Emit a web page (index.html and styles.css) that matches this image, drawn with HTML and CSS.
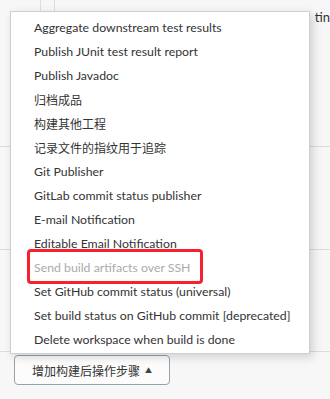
FILE: index.html
```html
<!DOCTYPE html>
<html lang="zh-CN">
<head>
    <meta charset="UTF-8">
    <meta name="viewport" content="width=device-width, initial-scale=1.0">
    <title>构建后操作</title>
    <link rel="stylesheet" href="styles.css">
</head>
<body>
    <div class="form">
        <div class="row row-first">
            <div class="cols">
                <span class="col"></span>
                <span class="col"></span>
            </div>
            <span class="peek">tin</span>
        </div>
        <div class="row row-mid"></div>
        <div class="row row-last"></div>

        <div class="actions">
            <button class="add-btn"><span class="zh">增加构建后操作步骤</span> <span class="caret">&#9650;</span></button>
        </div>
    </div>

    <ul class="menu">
        <li>Aggregate downstream test results</li>
        <li>Publish JUnit test result report</li>
        <li>Publish Javadoc</li>
        <li class="zh">归档成品</li>
        <li class="zh">构建其他工程</li>
        <li class="zh">记录文件的指纹用于追踪</li>
        <li>Git Publisher</li>
        <li>GitLab commit status publisher</li>
        <li>E-mail Notification</li>
        <li>Editable Email Notification</li>
        <li class="disabled">Send build artifacts over SSH</li>
        <li>Set GitHub commit status (universal)</li>
        <li>Set build status on GitHub commit [deprecated]</li>
        <li>Delete workspace when build is done</li>
    </ul>

    <!-- red annotation box -->
    <div class="mark"></div>
</body>
</html>
```

FILE: styles.css
```css
body {
    margin: 0;
    padding: 0;
    background: #f7f7f7;
    font-family: Lato, "Noto Sans CJK SC", sans-serif;
    font-size: 12.3px;
    color: #333;
    overflow: hidden;
}

.zh {
    font-family: "Noto Sans CJK SC", sans-serif;
    font-size: 12px;
}

.row {
    border-bottom: 1px solid #dcdcdc;
    display: flex;
    justify-content: space-between;
}

.row-first { height: 146px; }
.row-mid { height: 102px; }
.row-last { height: 101px; }

.cols {
    display: flex;
    padding-left: 40px;
    gap: 13px;
    height: 11px;
}

.col {
    width: 1px;
    height: 11px;
    background: #dedede;
}

.peek {
    margin-top: 9px;
    color: #333;
    white-space: nowrap;
    font-size: 13px;
    line-height: 16px;
}

.actions {
    padding: 3px 0 0 14px;
}

.add-btn {
    font-family: inherit;
    color: #333;
    background: #fcfcfc;
    border: 1.5px solid #99a1a8;
    border-radius: 4px;
    width: 156px;
    height: 30px;
    padding: 0 0 0 17px;
    display: flex;
    align-items: center;
    gap: 5px;
}

.caret {
    font-size: 7px;
    color: #444;
}

/* dropdown opened above the button */
.menu {
    position: absolute;
    left: 10px;
    top: 11px;
    width: 298px;
    margin: 0;
    padding: 4px 0 1px;
    list-style: none;
    background: #fff;
    border: 1px solid #c8d0d8;
    box-shadow: 3px 3px 9px rgba(0, 0, 0, 0.16);
}

.menu li {
    height: 24px;
    line-height: 24px;
    padding-left: 23px;
    white-space: nowrap;
}

.menu li.disabled {
    color: #aaa;
}

.mark {
    position: absolute;
    left: 27px;
    top: 249px;
    width: 170px;
    height: 29px;
    border: 3px solid #f5222d;
    border-radius: 4px;
}
```
